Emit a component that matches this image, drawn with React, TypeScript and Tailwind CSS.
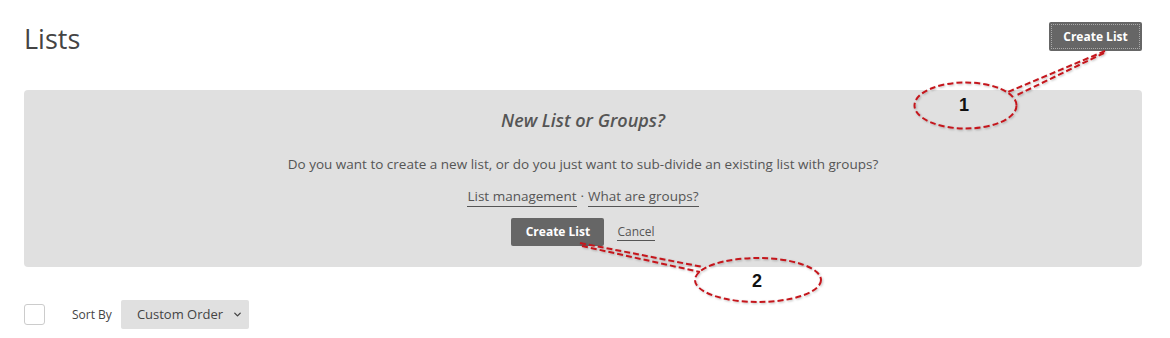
import { ChevronDown } from "lucide-react";

function Annotations() {
  return (
    <svg
      className="pointer-events-none absolute left-0 top-0"
      width={1170}
      height={338}
      viewBox="0 0 1170 338"
    >
      <defs>
        <filter id="shade" x="-10%" y="-10%" width="120%" height="130%">
          <feDropShadow dx="1" dy="1" stdDeviation="1" floodColor="#000" floodOpacity="0.25" />
        </filter>
      </defs>
      <g fill="none" stroke="#c4161c" strokeWidth={2} strokeDasharray="6 3" filter="url(#shade)">
        <ellipse cx={965.5} cy={105.5} rx={51} ry={23} />
        <line x1={1105} y1={51} x2={1008} y2={92} />
        <line x1={1104} y1={53} x2={1015} y2={96} />
        <ellipse cx={758} cy={280} rx={63} ry={22} />
        <line x1={580} y1={243} x2={703} y2={267} />
        <line x1={582} y1={246} x2={700} y2={272} />
      </g>
      <g fontFamily="'Liberation Sans', Arial, sans-serif" fontWeight={700} fontSize={18} fill="#111">
        <text x={964} y={111} textAnchor="middle">1</text>
        <text x={757} y={287} textAnchor="middle">2</text>
      </g>
    </svg>
  );
}

export default function App() {
  return (
    <div className="relative h-[338px] w-[1170px] bg-white pl-6 pr-[28px] text-[#444] font-['Open_Sans',sans-serif]">
      <header className="flex items-start justify-between pt-[22px]">
        <h1 className="text-[27px] leading-[34px] text-[#444]">Lists</h1>
        <button
          type="button"
          className="h-[29px] w-[93px] rounded-[2px] bg-[#666] p-[2px] text-[12px] font-bold text-white"
        >
          <span className="flex h-full w-full items-center justify-center border border-dotted border-[#aaa]">
            Create List
          </span>
        </button>
      </header>

      <section className="mt-[34px] flex flex-col items-center rounded-[4px] bg-[#e0e0e0] pb-[21px] pt-[18px]">
        <h2 className="text-[18px] font-semibold italic leading-[24px] text-[#555]">New List or Groups?</h2>
        <p className="mt-[22px] text-[13.5px] leading-[20px] text-[#555]">
          Do you want to create a new list, or do you just want to sub-divide an existing list with groups?
        </p>
        <p className="mt-[12px] text-[13.5px] leading-[20px] text-[#555]">
          <a className="border-b border-[#555] pb-[1px]">List management</a>
          <span className="mx-[4px]">·</span>
          <a className="border-b border-[#555] pb-[1px]">What are groups?</a>
        </p>
        <div className="mt-[12px] flex items-center gap-[13px]">
          <button
            type="button"
            className="h-[28px] w-[93px] rounded-[2px] bg-[#666] text-[12px] font-bold text-white"
          >
            Create List
          </button>
          <a className="border-b border-[#555] text-[12px] leading-[16px] text-[#555]">Cancel</a>
        </div>
      </section>

      <div className="mt-[33px] flex items-center">
        <span className="h-[21px] w-[21px] rounded-[3px] border border-[#ccc] bg-white" />
        <span className="ml-[27px] text-[12px] text-[#444]">Sort By</span>
        <button
          type="button"
          className="ml-[9px] flex h-[29px] w-[128px] items-center rounded-[2px] bg-[#e0e0e0] pl-[16px] text-[13px] text-[#444]"
        >
          Custom Order
          <ChevronDown className="ml-[9px]" size={11} strokeWidth={3} />
        </button>
      </div>

      <Annotations />
    </div>
  );
}
